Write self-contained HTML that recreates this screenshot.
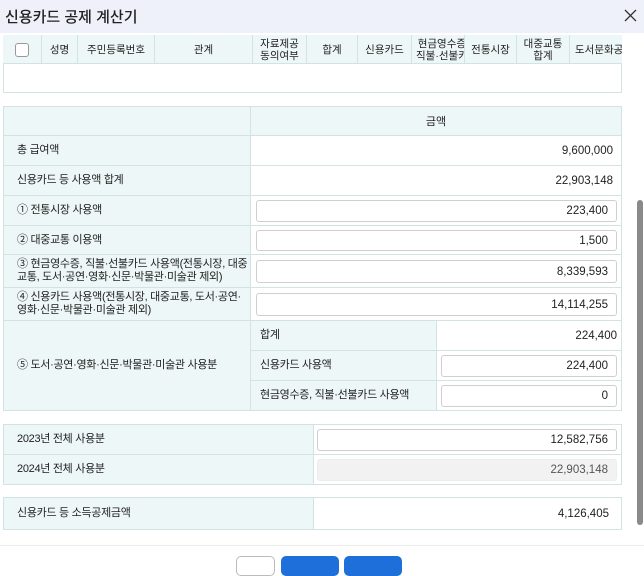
<!DOCTYPE html>
<html><head><meta charset="utf-8"><style>
*{box-sizing:border-box;margin:0;padding:0}
body{width:644px;height:565px;overflow:hidden;background:#fff;font-family:"Liberation Sans","Noto Sans CJK KR",sans-serif;font-size:11px;color:#222;position:relative}
.title{position:absolute;left:0;top:0;width:644px;height:33px;background:#eef1f9;}
.title span{position:absolute;left:5px;top:6px;font-size:15px;font-weight:500;color:#222}
.abs{position:absolute}
.lab{position:absolute;background:#eef7f7;border-bottom:1px solid #d3e3e3;border-right:1px solid #d3e3e3;padding-left:13px;display:flex;align-items:center;line-height:13px;letter-spacing:-0.3px}
.val{position:absolute;border-bottom:1px solid #d3e3e3;display:flex;align-items:center;justify-content:flex-end;padding-right:8px;font-size:11.5px}
.inp{position:absolute;border:1px solid #cfcfcf;border-radius:3px;background:#fff;display:flex;align-items:center;justify-content:flex-end;padding-right:8px;font-size:11.5px}
.h{position:absolute;top:35px;height:29px;display:flex;align-items:center;justify-content:center;text-align:center;line-height:12px;border-right:1px solid #d3e3e3;font-size:10.5px}
</style></head><body>
<div class="title"><span>신용카드 공제 계산기</span>
<svg style="position:absolute;left:624px;top:9px" width="13" height="13" viewBox="0 0 13 13"><path d="M1 1L12 12M12 1L1 12" stroke="#333" stroke-width="1.3" fill="none"/></svg></div>

<div class="abs" style="left:3px;top:35px;width:619px;height:58px;border:1px solid #d3e3e3;border-top:none"></div>
<div class="abs" style="left:3px;top:35px;width:619px;height:29px;background:#eef7f7;border-bottom:1px solid #d3e3e3"></div>
<div class="h" style="left:3px;width:39px"><span style="width:14px;height:14px;border:1px solid #999;border-radius:3px;background:#fff;display:block"></span></div>
<div class="h" style="left:42px;width:36px">성명</div>
<div class="h" style="left:78px;width:77px">주민등록번호</div>
<div class="h" style="left:155px;width:98px">관계</div>
<div class="h" style="left:253px;width:54px">자료제공<br>동의여부</div>
<div class="h" style="left:307px;width:51px">합계</div>
<div class="h" style="left:358px;width:54px">신용카드</div>
<div class="h" style="left:412px;width:53px;overflow:hidden;white-space:nowrap;justify-content:flex-start;padding-left:4px">현금영수증<br>직불·선불카</div>
<div class="h" style="left:465px;width:52px">전통시장</div>
<div class="h" style="left:517px;width:53px">대중교통<br>합계</div>
<div class="h" style="left:570px;width:52px;border-right:none;overflow:hidden;white-space:nowrap;justify-content:flex-start;padding-left:5px">도서문화공</div>

<div class="abs" style="left:3px;top:106px;width:619px;height:305px;border:1px solid #d3e3e3;border-bottom:none"></div>
<div class="lab" style="left:4px;top:107px;width:247px;height:29px"></div>
<div class="abs" style="left:251px;top:107px;width:370px;height:29px;background:#eef7f7;border-bottom:1px solid #d3e3e3;display:flex;align-items:center;justify-content:center">금액</div>

<div class="lab" style="left:4px;top:136px;width:247px;height:30px">총 급여액</div>
<div class="val" style="left:251px;top:136px;width:370px;height:30px">9,600,000</div>
<div class="lab" style="left:4px;top:166px;width:247px;height:30px">신용카드 등 사용액 합계</div>
<div class="val" style="left:251px;top:166px;width:370px;height:30px">22,903,148</div>
<div class="lab" style="left:4px;top:196px;width:247px;height:30px">① 전통시장 사용액</div>
<div class="val" style="left:251px;top:196px;width:370px;height:30px"></div>
<div class="inp" style="left:256px;top:200px;width:361px;height:22px">223,400</div>
<div class="lab" style="left:4px;top:226px;width:247px;height:29px">② 대중교통 이용액</div>
<div class="val" style="left:251px;top:226px;width:370px;height:29px"></div>
<div class="inp" style="left:256px;top:230px;width:361px;height:21px">1,500</div>
<div class="lab" style="left:4px;top:255px;width:247px;height:33px;padding-right:2px">③ 현금영수증, 직불·선불카드 사용액(전통시장, 대중교통, 도서·공연·영화·신문·박물관·미술관 제외)</div>
<div class="val" style="left:251px;top:255px;width:370px;height:33px"></div>
<div class="inp" style="left:256px;top:260px;width:361px;height:23px">8,339,593</div>
<div class="lab" style="left:4px;top:288px;width:247px;height:33px;padding-right:2px">④ 신용카드 사용액(전통시장, 대중교통, 도서·공연·영화·신문·박물관·미술관 제외)</div>
<div class="val" style="left:251px;top:288px;width:370px;height:33px"></div>
<div class="inp" style="left:256px;top:293px;width:361px;height:23px">14,114,255</div>
<div class="lab" style="left:4px;top:321px;width:247px;height:90px">⑤ 도서·공연·영화·신문·박물관·미술관 사용분</div>
<div class="lab" style="left:251px;top:321px;width:186px;height:30px;padding-left:9px">합계</div>
<div class="val" style="left:437px;top:321px;width:184px;height:30px;padding-right:4px">224,400</div>
<div class="lab" style="left:251px;top:351px;width:186px;height:30px;padding-left:9px">신용카드 사용액</div>
<div class="val" style="left:437px;top:351px;width:184px;height:30px"></div>
<div class="inp" style="left:441px;top:355px;width:176px;height:22px">224,400</div>
<div class="lab" style="left:251px;top:381px;width:186px;height:30px;padding-left:9px">현금영수증, 직불·선불카드 사용액</div>
<div class="val" style="left:437px;top:381px;width:184px;height:30px"></div>
<div class="inp" style="left:441px;top:385px;width:176px;height:22px">0</div>

<div class="abs" style="left:3px;top:424px;width:619px;height:61px;border:1px solid #d3e3e3;border-bottom:none"></div>
<div class="lab" style="left:4px;top:425px;width:310px;height:30px">2023년 전체 사용분</div>
<div class="val" style="left:314px;top:425px;width:307px;height:30px"></div>
<div class="inp" style="left:317px;top:429px;width:300px;height:22px">12,582,756</div>
<div class="lab" style="left:4px;top:455px;width:310px;height:30px">2024년 전체 사용분</div>
<div class="val" style="left:314px;top:455px;width:307px;height:30px"></div>
<div class="inp" style="left:317px;top:459px;width:300px;height:22px;background:#f2f2f2;border-color:#ececec;color:#555">22,903,148</div>

<div class="abs" style="left:3px;top:497px;width:619px;height:33px;border:1px solid #d3e3e3;border-bottom:none"></div>
<div class="lab" style="left:4px;top:498px;width:310px;height:32px">신용카드 등 소득공제금액</div>
<div class="val" style="left:314px;top:498px;width:307px;height:32px;padding-right:12px">4,126,405</div>

<div class="abs" style="left:637px;top:200px;width:6px;height:325px;background:#8a8a8a;border-radius:3px"></div>

<div class="abs" style="left:0;top:545px;width:644px;height:1px;background:#ececec"></div>
<div class="abs" style="left:236px;top:556px;width:39px;height:20px;border:1px solid #bbb;border-radius:5px;background:#fff"></div>
<div class="abs" style="left:281px;top:556px;width:58px;height:20px;border-radius:5px;background:#1e6fd9"></div>
<div class="abs" style="left:344px;top:556px;width:58px;height:20px;border-radius:5px;background:#1e6fd9"></div>
</body></html>
